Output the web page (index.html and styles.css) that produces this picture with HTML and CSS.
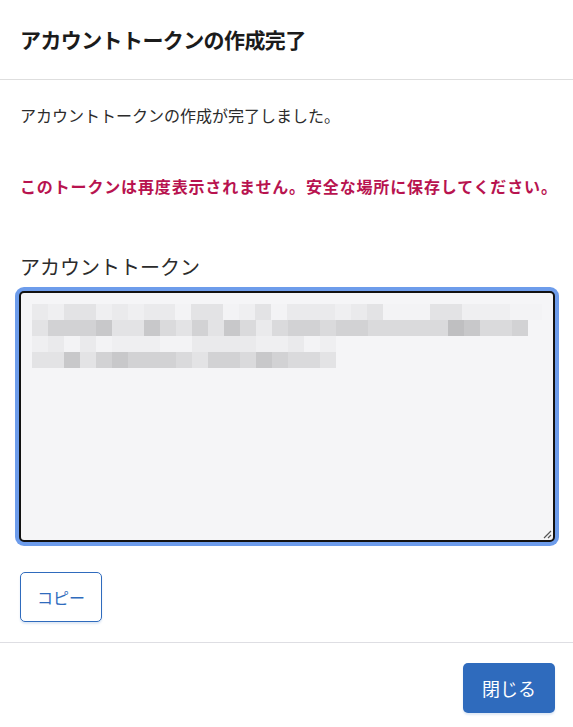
FILE: index.html
```html
<!DOCTYPE html>
<html lang="ja">
<head>
    <meta charset="UTF-8">
    <meta name="viewport" content="width=device-width, initial-scale=1.0">
    <title>アカウントトークンの作成完了</title>
    <link rel="stylesheet" href="styles.css">
</head>
<body>
    <div class="modal">
        <div class="modal-header">
            <h2>アカウントトークンの作成完了</h2>
        </div>

        <div class="modal-body">
            <p class="message">アカウントトークンの作成が完了しました。</p>
            <p class="warning">このトークンは再度表示されません。安全な場所に保存してください。</p>

            <label class="field-label">アカウントトークン</label>
            <div class="token-box">
                <!-- token is redacted: pixelated blocks -->
                <div class="token-row">
                    <span class="s2"></span><span class="s1"></span><span class="s3"></span><span class="s3"></span><span class="s1"></span><span class="s2"></span><span class="s1"></span><span class="s2"></span>
                    <span class="s2"></span><span class="s0"></span><span class="s3"></span><span class="s3"></span><span class="s0"></span><span class="s1"></span><span class="s3"></span><span class="s0"></span>
                    <span class="s2"></span><span class="s2"></span><span class="s2"></span><span class="s1"></span><span class="s2"></span><span class="s3"></span><span class="s0"></span><span class="s0"></span>
                    <span class="s0"></span><span class="s3"></span><span class="s3"></span><span class="s1"></span><span class="s1"></span><span class="s1"></span><span class="s0"></span><span class="s0"></span>
                </div>
                <div class="token-row">
                    <span class="s3"></span><span class="s5"></span><span class="s5"></span><span class="s5"></span><span class="s6"></span><span class="s3"></span><span class="s3"></span><span class="s6"></span>
                    <span class="s4"></span><span class="s3"></span><span class="s5"></span><span class="s3"></span><span class="s6"></span><span class="s4"></span><span class="s2"></span><span class="s4"></span>
                    <span class="s5"></span><span class="s5"></span><span class="s4"></span><span class="s5"></span><span class="s5"></span><span class="s4"></span><span class="s4"></span><span class="s4"></span>
                    <span class="s4"></span><span class="s4"></span><span class="s7"></span><span class="s6"></span><span class="s4"></span><span class="s4"></span><span class="s5"></span>
                </div>
                <div class="token-row">
                    <span class="s1"></span><span class="s2"></span><span class="s0"></span><span class="s2"></span><span class="s0"></span><span class="s1"></span><span class="s1"></span><span class="s1"></span>
                    <span class="s0"></span><span class="s0"></span><span class="s2"></span><span class="s2"></span><span class="s2"></span><span class="s2"></span><span class="s1"></span><span class="s1"></span>
                    <span class="s2"></span><span class="s0"></span><span class="s1"></span>
                </div>
                <div class="token-row">
                    <span class="s3"></span><span class="s3"></span><span class="s6"></span><span class="s3"></span><span class="s5"></span><span class="s6"></span><span class="s5"></span><span class="s5"></span>
                    <span class="s5"></span><span class="s4"></span><span class="s3"></span><span class="s5"></span><span class="s5"></span><span class="s4"></span><span class="s6"></span><span class="s5"></span>
                    <span class="s4"></span><span class="s4"></span><span class="s3"></span>
                </div>
                <svg class="resize-grip" width="9" height="9" viewBox="0 0 9 9">
                    <path d="M8 1 L1 8 M8 5 L5 8" stroke="#555" stroke-width="1.2" fill="none"/>
                </svg>
            </div>

            <button class="btn btn-outline">コピー</button>
        </div>

        <div class="modal-footer">
            <button class="btn btn-primary">閉じる</button>
        </div>
    </div>
</body>
</html>
```

FILE: styles.css
```css
* {
    margin: 0;
    padding: 0;
    box-sizing: border-box;
}

body {
    font-family: "Noto Sans CJK JP", "Noto Sans", sans-serif;
    background: #ffffff;
    color: #2b2b2b;
}

.modal {
    width: 573px;
    min-height: 727px;
    background: #fff;
}

.modal-header {
    height: 80px;
    padding: 0 19px 1px 20px;
    display: flex;
    align-items: center;
    border-bottom: 1px solid #dedede;
}

.modal-header h2 {
    font-size: 21px;
    font-weight: 700;
    letter-spacing: -0.6px;
    color: #1b1b1b;
    line-height: 28px;
}

.modal-body {
    padding: 23px 18px 20px 19px;
    border-bottom: 1px solid #dedee3;
}

.message {
    font-size: 16px;
    line-height: 24px;
    letter-spacing: 0;
    padding-left: 1px;
}

.warning {
    margin-top: 47px;
    font-size: 16px;
    line-height: 24px;
    font-weight: 700;
    letter-spacing: 0.85px;
    color: #b8134f;
    white-space: nowrap;
    padding-left: 1px;
}

.field-label {
    display: block;
    margin-top: 55px;
    font-size: 20px;
    line-height: 28px;
    color: #2b2b2b;
    padding-left: 1px;
}

.token-box {
    position: relative;
    margin-top: 10px;
    height: 251px;
    padding: 11px;
    background: #f5f5f7;
    border: 2px solid #111;
    border-radius: 5px;
    box-shadow: 0 0 0 4px #6d9ceb;
}

.token-row {
    display: flex;
    height: 16px;
}

.token-row span {
    width: 16px;
    height: 16px;
}

.s0 { background: #f3f3f5; }
.s1 { background: #efeff1; }
.s2 { background: #eaeaec; }
.s3 { background: #e3e3e5; }
.s4 { background: #dadadc; }
.s5 { background: #d2d2d4; }
.s6 { background: #c8c8ca; }
.s7 { background: #bfbfc1; }

.resize-grip {
    position: absolute;
    right: 1px;
    bottom: 1px;
}

.btn {
    font-family: inherit;
    height: 50px;
    border-radius: 5px;
    cursor: pointer;
}

.btn-outline {
    margin-top: 30px;
    margin-left: 1px;
    width: 82px;
    font-size: 16px;
    color: #2f6bbd;
    background: #fff;
    border: 1px solid #2f6bbd;
    box-shadow: 0 2px 2px rgba(47, 107, 189, 0.15);
}

.modal-footer {
    display: flex;
    justify-content: flex-end;
    padding: 20px 18px 14px 19px;
}

.btn-primary {
    width: 92px;
    font-size: 18px;
    color: #fff;
    background: #2f6bbd;
    border: none;
    box-shadow: 0 2px 2px rgba(47, 107, 189, 0.15);
}
```
